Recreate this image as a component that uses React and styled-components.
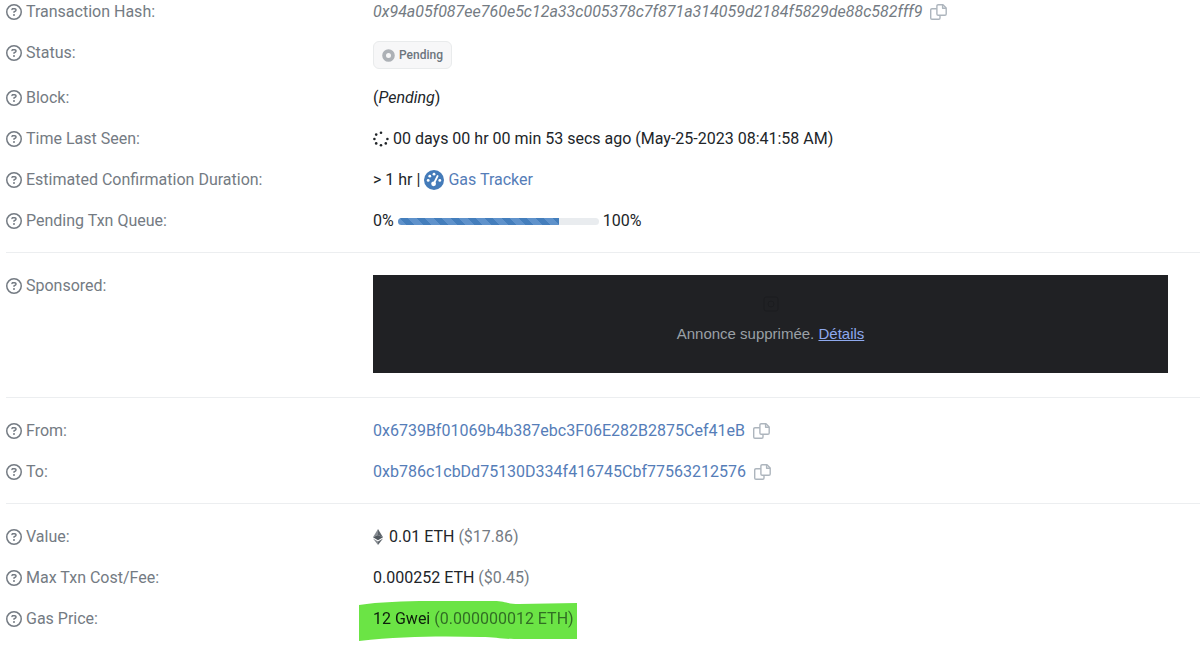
import React from 'react';
import styled, { createGlobalStyle } from 'styled-components';
import { FaRegCircleQuestion } from 'react-icons/fa6';

const GlobalStyle = createGlobalStyle`
  body {
    margin: 0;
    background: #ffffff;
    color: #212529;
    font-family: Roboto, 'Liberation Sans', sans-serif;
    font-size: 16px;
    line-height: 24px;
  }
`;

const Page = styled.main`
  padding-left: 6px;
  overflow-x: hidden;
`;

const Group = styled.dl`
  display: flex;
  flex-direction: column;
  gap: 17px;
  margin: 0;
  padding: ${props => (props.$first ? '0' : '21px')} 0 19px;
  border-bottom: ${props => (props.$last ? 'none' : '1px solid #eceef0')};
`;

const Row = styled.div`
  display: grid;
  grid-template-columns: 367px 1fr;
`;

const Label = styled.dt`
  display: flex;
  align-items: center;
  gap: 4px;
  height: 24px;
  color: #747b83;
`;

const Value = styled.dd`
  display: flex;
  align-items: center;
  gap: 4px;
  min-height: 24px;
  margin: 0;
  white-space: nowrap;
`;

const Hash = styled.em`
  color: #747b83;
`;

const Muted = styled.span`
  color: #747b83;
`;

const Link = styled.a`
  display: flex;
  align-items: center;
  gap: 4px;
  color: #557db8;
  text-decoration: none;
`;

const CopyButton = styled.button`
  display: flex;
  margin-left: 4px;
  padding: 0;
  border: 0;
  background: none;
  color: #adb5bd;
  cursor: pointer;
`;

const Badge = styled.span`
  display: flex;
  align-items: center;
  gap: 4px;
  box-sizing: border-box;
  height: 28px;
  padding: 0 8px;
  border: 1px solid #e9ebec;
  border-radius: 6px;
  background: #f7f7f8;
  color: #6c757d;
  font-size: 12px;
  font-weight: 500;
`;

const Progress = styled.div`
  width: 201px;
  height: 7px;
  border-radius: 4px;
  background: #e9ecef;
  overflow: hidden;
`;

const ProgressBar = styled.div`
  height: 100%;
  background: repeating-linear-gradient(
    45deg,
    #5f92cb 0 6px,
    #447ebc 6px 12px
  );
`;

const Ad = styled.div`
  display: flex;
  flex: 1;
  flex-direction: column;
  align-items: center;
  justify-content: center;
  gap: 10px;
  box-sizing: border-box;
  height: 98px;
  margin: 1px 32px 5px 0;
  padding-bottom: 6px;
  background: #202124;
  color: #9aa0a6;
  font-family: 'Liberation Sans', Arial, sans-serif;
  font-size: 15px;
`;

const AdText = styled.p`
  margin: 0;
`;

const AdLink = styled.a`
  color: #8ea9ee;
`;

const Ether = styled.span`
  display: flex;
  align-items: center;
  gap: 6px;
`;

const Highlight = styled.span`
  position: relative;
  display: flex;
  gap: 4px;
  isolation: isolate;
`;

const Marker = styled.svg`
  position: absolute;
  z-index: 1;
  top: -7px;
  left: -14px;
  mix-blend-mode: multiply;
  pointer-events: none;
`;

const Dot = () => (
  <svg width="13" height="13" viewBox="0 0 13 13" aria-hidden="true">
    <circle cx="6.5" cy="6.5" r="4.4" fill="none" stroke="#adb1b6" strokeWidth="3.8" />
  </svg>
);

const Spinner = () => (
  <svg width="16" height="16" viewBox="0 0 16 16" fill="#212529" aria-hidden="true">
    <circle cx="8" cy="1.8" r="1.3" />
    <circle cx="3.2" cy="3.6" r="1.3" />
    <circle cx="1.4" cy="8" r="1.3" />
    <circle cx="3.2" cy="12.4" r="1.3" />
    <circle cx="8" cy="14.2" r="1.3" />
    <circle cx="12.8" cy="12.4" r="1.3" />
    <circle cx="14.4" cy="8" r="1.3" />
  </svg>
);

const Gauge = () => (
  <svg width="20" height="20" viewBox="0 0 20 20" aria-hidden="true">
    <circle cx="10" cy="10" r="10" fill="#447bb9" />
    <g fill="#ffffff">
      <circle cx="4.2" cy="10.4" r="1.4" />
      <circle cx="5.8" cy="6.2" r="1.4" />
      <circle cx="10" cy="4.2" r="1.4" />
      <circle cx="15.8" cy="10.4" r="1.4" />
      <circle cx="9.6" cy="13.8" r="2.4" />
    </g>
    <path d="M9.8 13.6L13.6 6" stroke="#ffffff" strokeWidth="1.8" strokeLinecap="round" />
  </svg>
);

const EtherMark = () => (
  <svg width="10" height="16" viewBox="0 0 10 16" aria-hidden="true">
    <path d="M5 0L0 8.2L5 6Z" fill="#858a90" />
    <path d="M5 0L10 8.2L5 6Z" fill="#5d646b" />
    <path d="M0 8.2L5 6L10 8.2L5 11.2Z" fill="#50575e" />
    <path d="M0 9.6L5 12.6V16Z" fill="#858a90" />
    <path d="M10 9.6L5 12.6V16Z" fill="#5d646b" />
  </svg>
);

const Field = ({ label, children }) => (
  <Row>
    <Label>
      <FaRegCircleQuestion size={16} aria-hidden="true" />
      {label}:
    </Label>
    <Value>{children}</Value>
  </Row>
);

const Copy = () => (
  <CopyButton type="button" aria-label="Copy">
    <svg
      width="17"
      height="16"
      viewBox="0 0 17 16"
      fill="none"
      stroke="currentColor"
      strokeWidth="1.4"
      strokeLinejoin="round"
    >
      <path d="M8.2 0.7H13L16.2 3.9V10Q16.2 11.3 14.9 11.3H8.2Q6.9 11.3 6.9 10V2Q6.9 0.7 8.2 0.7Z" />
      <path d="M12.6 0.9V4.3H16" />
      <path d="M6.9 4.7H2Q0.7 4.7 0.7 6V14Q0.7 15.3 2 15.3H8.7Q10 15.3 10 14V11.3" />
    </svg>
  </CopyButton>
);

const addresses = [
  { label: 'From', address: '0x6739Bf01069b4b387ebc3F06E282B2875Cef41eB' },
  { label: 'To', address: '0xb786c1cbDd75130D334f416745Cbf77563212576' }
];

const queue = 80;

const App = () => {
  return (
    <Page>
      <GlobalStyle />
      <Group $first>
        <Field label="Transaction Hash">
          <Hash>0x94a05f087ee760e5c12a33c005378c7f871a314059d2184f5829de88c582fff9</Hash>
          <Copy />
        </Field>
        <Field label="Status">
          <Badge>
            <Dot />
            Pending
          </Badge>
        </Field>
        <Field label="Block">
          <span>
            (<em>Pending</em>)
          </span>
        </Field>
        <Field label="Time Last Seen">
          <Spinner />
          00 days 00 hr 00 min 53 secs ago (May-25-2023 08:41:58 AM)
        </Field>
        <Field label="Estimated Confirmation Duration">
          &gt; 1 hr |
          <Link href="#gastracker">
            <Gauge />
            Gas Tracker
          </Link>
        </Field>
        <Field label="Pending Txn Queue">
          0%
          <Progress role="progressbar" aria-label="Pending Txn Queue" aria-valuenow={queue}>
            <ProgressBar style={{ width: `${queue}%` }} />
          </Progress>
          100%
        </Field>
      </Group>
      <Group>
        <Field label="Sponsored">
          <Ad>
            <svg width="16" height="16" viewBox="0 0 16 16" fill="none" stroke="#1b1c1f" aria-hidden="true">
              <rect x="1" y="1" width="14" height="14" rx="2" />
              <circle cx="8" cy="8" r="3" />
            </svg>
            <AdText>
              Annonce supprimée. <AdLink href="#details">Détails</AdLink>
            </AdText>
          </Ad>
        </Field>
      </Group>
      <Group>
        {addresses.map(a => (
          <Field key={a.label} label={a.label}>
            <Link href={`#${a.address}`}>{a.address}</Link>
            <Copy />
          </Field>
        ))}
      </Group>
      <Group $last>
        <Field label="Value">
          <Ether>
            <EtherMark />
            0.01 ETH
          </Ether>
          <Muted>($17.86)</Muted>
        </Field>
        <Field label="Max Txn Cost/Fee">
          0.000252 ETH <Muted>($0.45)</Muted>
        </Field>
        <Field label="Gas Price">
          <Highlight>
            12 Gwei <Muted>(0.000000012 ETH)</Muted>
            <Marker width="219" height="42" viewBox="0 0 219 42" aria-hidden="true">
              <path
                d="M0 5C20 2 45 1 70 1H135C146 1 148 4 160 4L218 3V39H155C142 39 136 37 122 37C85 36 45 36 0 41Z"
                fill="#6be445"
              />
            </Marker>
          </Highlight>
        </Field>
      </Group>
    </Page>
  );
};

export default App;
